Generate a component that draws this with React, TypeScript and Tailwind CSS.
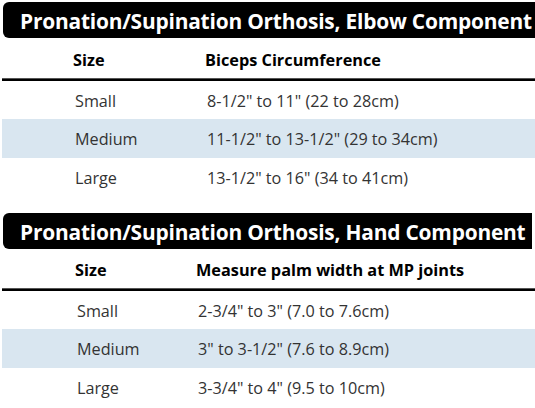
import React from "react";

type Row = { size: string; value: string };

const Section = ({
  title,
  col2,
  rows,
  sizeX,
  barRight,
  headH,
}: {
  title: string;
  col2: string;
  rows: Row[];
  sizeX: string;
  barRight: string;
  headH: string;
}) => (
  <div className="flex flex-col">
    <div className={`ml-[3px] ${barRight} h-[36px] bg-black rounded-l-[6px] flex items-center pl-[17px] pt-[3px]`}>
      <span className="text-white font-bold text-[20.9px] leading-none whitespace-nowrap tracking-[-0.2px]">{title}</span>
    </div>
    <div className={`${headH} flex items-center pt-[4px] font-bold text-[16.3px] text-black`}>
      <span className={sizeX}>Size</span>
      <span className="whitespace-nowrap">{col2}</span>
    </div>
    <div className="ml-[2px] h-[3px] bg-black border-t border-[#555]" />
    {rows.map((r, i) => (
      <div
        key={r.size}
        className={`${i === 0 ? "h-[38px]" : "h-[39px]"} ml-[2px] flex items-center pt-[2px] text-[16.2px] text-[#333] ${i === 1 ? "bg-[#d9e6f0]" : ""}`}
      >
        <span className={sizeX}>{r.size}</span>
        <span className="whitespace-nowrap">{r.value}</span>
      </div>
    ))}
  </div>
);

export default function App() {
  return (
    <div className="w-[535px] h-[408px] bg-white overflow-hidden pt-[2px] font-['Open_Sans',sans-serif]">
      <Section
        title="Pronation/Supination Orthosis, Elbow Component"
        col2="Biceps Circumference"
        sizeX="pl-[73px] w-[205px] shrink-0"
        barRight="mr-0"
        headH="h-[40px]"
        rows={[
          { size: "Small", value: '8-1/2" to 11" (22 to 28cm)' },
          { size: "Medium", value: '11-1/2" to 13-1/2" (29 to 34cm)' },
          { size: "Large", value: '13-1/2" to 16" (34 to 41cm)' },
        ]}
      />
      <div className="h-[16px]" />
      <Section
        title="Pronation/Supination Orthosis, Hand Component"
        col2="Measure palm width at MP joints"
        sizeX="pl-[75px] w-[196px] shrink-0"
        barRight="mr-[3px]"
        headH="h-[39px]"
        rows={[
          { size: "Small", value: '2-3/4" to 3" (7.0 to 7.6cm)' },
          { size: "Medium", value: '3" to 3-1/2" (7.6 to 8.9cm)' },
          { size: "Large", value: '3-3/4" to 4" (9.5 to 10cm)' },
        ]}
      />
    </div>
  );
}
